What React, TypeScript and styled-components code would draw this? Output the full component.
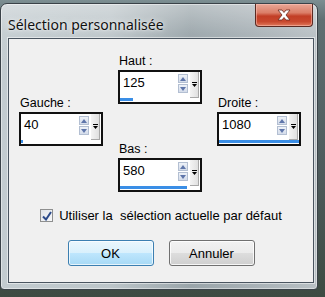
import React from "react";
import styled, { createGlobalStyle } from "styled-components";

const GlobalStyle = createGlobalStyle`
  html, body { margin: 0; padding: 0; }
  body {
    width: 325px;
    height: 297px;
    overflow: hidden;
    background: #4a5657;
  }
`;

const Desktop = styled.div`
  width: 325px;
  height: 297px;
  padding-top: 3px;
  box-sizing: border-box;
  background: linear-gradient(180deg, #7c8e92 0px, #5f6f72 20px, #4d5a5b 60%, #3d4b42 100%);
`;

const Window = styled.div`
  width: 318px;
  height: 287px;
  box-sizing: border-box;
  border: 1px solid #3a4248;
  border-radius: 7px 7px 4px 4px;
  padding: 0 3px 6px 7px;
  display: flex;
  flex-direction: column;
  background:
    linear-gradient(180deg, rgba(255,255,255,0.35) 0px, rgba(255,255,255,0.05) 30px, rgba(0,0,0,0) 60px),
    linear-gradient(90deg, #c3ccd0 0%, #bcc5c9 35%, #9aa5aa 60%, #a8b1b6 80%, #b8c0c4 100%);
  box-shadow: inset 0 0 0 1px rgba(255,255,255,0.45);
`;

const TitleBar = styled.div`
  height: 34px;
  display: flex;
  align-items: flex-start;
  justify-content: space-between;
`;

const Title = styled.div`
  font-family: "Noto Sans", "Open Sans", sans-serif;
  font-size: 14px;
  line-height: 20px;
  margin-top: 11px;
  color: #101010;
  text-shadow: 0 0 6px rgba(255,255,255,0.9), 0 0 2px rgba(255,255,255,0.8);
`;

const CloseButton = styled.div`
  width: 58px;
  height: 23px;
  margin-right: 1px;
  box-sizing: border-box;
  border: 1px solid #5b2a22;
  border-top: none;
  border-radius: 0 0 4px 4px;
  display: flex;
  align-items: center;
  justify-content: center;
  background: linear-gradient(180deg, #e9a796 0%, #db7e68 40%, #c23e26 55%, #c8482e 80%, #e07a5c 100%);
  box-shadow: inset 0 0 0 1px rgba(255,200,190,0.5);
`;

const Client = styled.div`
  flex: 1;
  background: #f0f0f0;
  border: 1px solid #4a5560;
  box-shadow: 0 0 0 1px rgba(255,255,255,0.5);
  display: flex;
  flex-direction: column;
  align-items: stretch;
  font-family: "Liberation Sans", Arial, sans-serif;
  font-size: 12px;
  color: #000;
`;

const Fields = styled.div`
  display: flex;
  align-items: flex-start;
  gap: 15px;
  padding: 15px 0 0 10px;
`;

const Column = styled.div<{ $offset?: number }>`
  display: flex;
  flex-direction: column;
  gap: 38px;
  margin-top: ${(p) => p.$offset ?? 0}px;
`;

const Field = styled.div`
  display: flex;
  flex-direction: column;
  gap: 2px;
`;

const Label = styled.div`
  height: 14px;
  line-height: 14px;
  padding-left: 1px;
  font-size: 12.5px;
`;

const SpinBox = styled.div`
  width: 84px;
  height: 34px;
  box-sizing: border-box;
  border: 2px solid #111;
  background: #fff;
  display: flex;
  flex-direction: column;
`;

const SpinTop = styled.div`
  flex: 1;
  display: flex;
  align-items: stretch;
`;

const ValueText = styled.div`
  flex: 1;
  padding: 4px 0 0 3px;
  font-size: 13px;
  line-height: 14px;
`;

const Arrows = styled.div`
  width: 10px;
  display: flex;
  flex-direction: column;
  gap: 1px;
  padding-top: 2px;
  margin-right: 2px;
`;

const ArrowBtn = styled.div`
  height: 9px;
  box-sizing: border-box;
  border: 1px solid #b3bfd2;
  background: linear-gradient(180deg, #eef2f8, #d4dcea);
  display: flex;
  align-items: center;
  justify-content: center;
`;

const DropCol = styled.div`
  width: 9px;
  margin-right: 1px;
  box-sizing: border-box;
  background: linear-gradient(90deg, #f4f4f4, #e0e0e0);
  border-right: 1px solid #a8a8a8;
  border-bottom: 1px solid #a8a8a8;
  display: flex;
  align-items: center;
  justify-content: center;
`;

const BarTrack = styled.div`
  height: 3px;
  margin: 0 0 1px 0;
  display: flex;
`;

const Bar = styled.div`
  height: 3px;
  background: #3a8ee6;
`;

const CheckRow = styled.label`
  display: flex;
  align-items: center;
  justify-content: center;
  gap: 6px;
  margin-top: 16px;
  font-size: 13px;
  white-space: pre;
`;

const CheckBox = styled.div`
  width: 13px;
  height: 13px;
  box-sizing: border-box;
  border: 1px solid #8e8f8f;
  background: linear-gradient(135deg, #dfe3e8, #f8f9fa);
  display: flex;
  align-items: center;
  justify-content: center;
`;

const Buttons = styled.div`
  display: flex;
  justify-content: center;
  gap: 15px;
  margin-top: 17px;
`;

const Button = styled.div<{ $primary?: boolean }>`
  width: 86px;
  height: 26px;
  box-sizing: border-box;
  border-radius: 3px;
  display: flex;
  align-items: center;
  justify-content: center;
  font-size: 13px;
  border: 1px solid ${(p) => (p.$primary ? "#3c7fb1" : "#707070")};
  background: ${(p) =>
    p.$primary
      ? "linear-gradient(180deg, #eaf6fd 0%, #d9f0fc 50%, #bee6fd 51%, #a7d9f5 100%)"
      : "linear-gradient(180deg, #f2f2f2 0%, #ebebeb 50%, #dddddd 51%, #cfcfcf 100%)"};
  box-shadow: inset 0 0 0 1px ${(p) => (p.$primary ? "rgba(255,255,255,0.7)" : "rgba(255,255,255,0.8)")};
`;

const UpIcon = () => (
  <svg width="6" height="4" viewBox="0 0 6 4">
    <path d="M0 4 L3 0 L6 4 Z" fill="#5f76aa" />
  </svg>
);
const DownIcon = () => (
  <svg width="6" height="4" viewBox="0 0 6 4">
    <path d="M0 0 L3 4 L6 0 Z" fill="#5f76aa" />
  </svg>
);
const DropIcon = () => (
  <svg width="5" height="5" viewBox="0 0 5 5">
    <rect x="0" y="0" width="5" height="1" fill="#000" />
    <path d="M0 2 L5 2 L2.5 5 Z" fill="#000" />
  </svg>
);

const CloseX = () => (
  <svg width="16" height="12" viewBox="0 0 16 12">
    <path
      d="M2 1 L6 1 L8 3.5 L10 1 L14 1 L10 6 L14 11 L10 11 L8 8.5 L6 11 L2 11 L6 6 Z"
      fill="#ffffff"
      stroke="#6a2a20"
      strokeWidth="0.8"
    />
  </svg>
);

const CheckMark = () => (
  <svg width="10" height="10" viewBox="0 0 10 10">
    <path d="M1 5.5 L4 8.5 L9 1" fill="none" stroke="#2b4a8a" strokeWidth="2" />
  </svg>
);

type SpinProps = { label: string; value: string; fill: number };

const Spin = ({ label, value, fill }: SpinProps) => (
  <Field>
    <Label>{label}</Label>
    <SpinBox>
      <SpinTop>
        <ValueText>{value}</ValueText>
        <Arrows>
          <ArrowBtn>
            <UpIcon />
          </ArrowBtn>
          <ArrowBtn>
            <DownIcon />
          </ArrowBtn>
        </Arrows>
        <DropCol>
          <DropIcon />
        </DropCol>
      </SpinTop>
      <BarTrack>
        <Bar style={{ width: `${fill}%` }} />
      </BarTrack>
    </SpinBox>
  </Field>
);

export default function App() {
  return (
    <>
      <GlobalStyle />
      <Desktop>
        <Window>
          <TitleBar>
            <Title>Sélection personnalisée</Title>
            <CloseButton>
              <CloseX />
            </CloseButton>
          </TitleBar>
          <Client>
            <Fields>
              <Column $offset={42}>
                <Spin label="Gauche :" value="40" fill={3} />
              </Column>
              <Column>
                <Spin label="Haut :" value="125" fill={16} />
                <Spin label="Bas :" value="580" fill={84} />
              </Column>
              <Column $offset={42}>
                <Spin label="Droite :" value="1080" fill={100} />
              </Column>
            </Fields>
            <CheckRow>
              <CheckBox>
                <CheckMark />
              </CheckBox>
              {"Utiliser la  sélection actuelle par défaut"}
            </CheckRow>
            <Buttons>
              <Button $primary>OK</Button>
              <Button>Annuler</Button>
            </Buttons>
          </Client>
        </Window>
      </Desktop>
    </>
  );
}
